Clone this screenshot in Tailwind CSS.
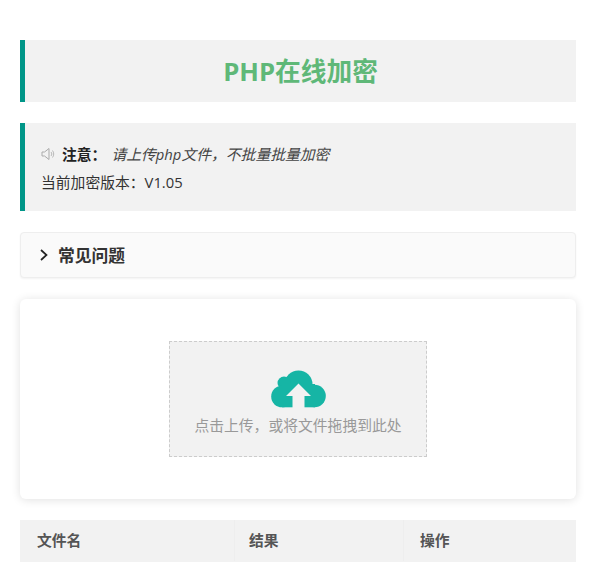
<!DOCTYPE html>
<html lang="zh-CN">
<head>
<meta charset="utf-8">
<script src="https://cdn.jsdelivr.net/npm/@tailwindcss/browser@4"></script>
</head>
<body class="bg-white h-[563px] overflow-hidden font-['Open_Sans','Noto_Sans_CJK_SC',sans-serif] text-[#333]">
<div class="pl-5 pr-[21px] pt-10 flex flex-col">
  <div class="h-[62px] bg-[#f2f2f2] border-l-[5px] border-[#009688] flex items-center justify-center pt-[1px]">
    <h1 class="text-[25.700px] font-bold text-[#5fb878] leading-none">PHP在线加密</h1>
  </div>
  <div class="mt-[21px] h-[88px] bg-[#f2f2f2] border-l-[5px] border-[#009688] pl-4 pt-[17px] text-[14.800px] leading-7">
    <div class="flex items-center h-7">
      <svg class="w-[14px] h-[14px] mr-[7px]" viewBox="0 0 14 14" fill="none" stroke="#aaa" stroke-width="1"><path d="M1 5h2.500L8 1.500v11L3.500 9H1z"/><path d="M10 5c1 1 1 3 0 4M11.500 3.500c1.600 2 1.600 5 0 7" stroke-width=".8"/></svg>
      <b class="font-bold text-[#222]">注意：</b>
      <i class="ml-[5px] italic text-[#444]">请上传php文件，不批量批量加密</i>
    </div>
    <div class="h-7 text-[#333]">当前加密版本：V1.05</div>
  </div>
  <div class="mt-[21px] h-[46px] bg-[#fafafa] border border-[#eee] rounded-sm shadow-[0_1px_2px_rgba(0,0,0,0.05)] flex items-center pl-[18px]">
    <svg class="w-[10px] h-[12px] mr-[9px]" viewBox="0 0 10 12" fill="none" stroke="#222" stroke-width="1.700"><path d="M2 1l5.500 5L2 11"/></svg>
    <span class="text-[16.800px] font-bold text-[#333] pt-[1px]">常见问题</span>
  </div>
  <div class="mt-[21px] h-[200px] bg-white rounded-md shadow-[0_1px_10px_rgba(0,0,0,0.12)] flex items-center justify-center">
    <div class="w-[258px] h-[116px] bg-[#f2f2f2] border border-dashed border-[#ccc] flex flex-col items-center pt-[28px]">
      <svg class="w-[56px] h-[38px]" viewBox="0 0 56 38" fill="#16b5a5">
        <circle cx="28.500" cy="14.500" r="14"/><circle cx="14" cy="13" r="6.500"/><circle cx="12" cy="26.500" r="10.800"/><circle cx="44.500" cy="26" r="11.300"/><rect x="12" y="14" width="33" height="23.300"/>
        <path fill="#f2f2f2" d="M28.500 13.500L41 26h-6.500v12h-12V26H16z"/>
      </svg>
      <span class="mt-[5px] text-[14.800px] leading-6 text-[#999]">点击上传，或将文件拖拽到此处</span>
    </div>
  </div>
  <div class="mt-[21px] h-[42px] pb-[1px] bg-[#f2f2f2] grid grid-cols-[215px_169px_1fr] items-stretch text-[14.800px] font-bold text-[#555]">
    <div class="flex items-center pl-[17px] border-r border-[#eee]">文件名</div>
    <div class="flex items-center pl-[14px] border-r border-[#eee]">结果</div>
    <div class="flex items-center pl-[16px]">操作</div>
  </div>
</div>
</body>
</html>
